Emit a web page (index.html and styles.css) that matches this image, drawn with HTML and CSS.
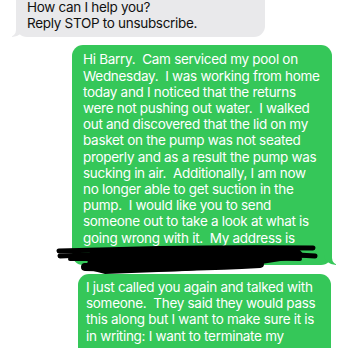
FILE: index.html
```html
<!DOCTYPE html>
<html>
<head>
<meta charset="utf-8">
<link rel="stylesheet" href="styles.css">
</head>
<body>
<div class="screen">
  <div class="row row-in">
    <div class="bubble in"><p class="msg">How can I help you?
Reply STOP to unsubscribe.</p></div>
  </div>
  <div class="row row-out">
    <div class="bubble out out-1"><p class="msg">Hi Barry.  Cam serviced my pool on
Wednesday.  I was working from home
today and I noticed that the returns
were not pushing out water.  I walked
out and discovered that the lid on my
basket on the pump was not seated
properly and as a result the pump was
sucking in air.  Additionally, I am now
no longer able to get suction in the
pump.  I would like you to send
someone out to take a look at what is
going wrong with it.  My address is
 </p></div>
  </div>
  <div class="row row-out">
    <div class="bubble out out-2"><p class="msg">I just called you again and talked with
someone.  They said they would pass
this along but I want to make sure it is
in writing: I want to terminate my</p></div>
  </div>
  <svg class="scribble" width="348" height="60" viewBox="0 230 348 60" aria-hidden="true">
    <path d="M90,251 L298,248 L306,257 L255,265 L185,271 L105,274 L86,269 Z" fill="#000"/>
    <path d="M59,251 C120,249 230,247 313,248" stroke="#000" stroke-width="5" fill="none" stroke-linecap="round"/>
    <path d="M60,256 C130,253 240,252 315,256" stroke="#000" stroke-width="5" fill="none" stroke-linecap="round"/>
    <path d="M70,259 C120,259 200,257 300,259" stroke="#000" stroke-width="4" fill="none" stroke-linecap="round"/>
    <path d="M85,267 C140,269 200,267 260,264" stroke="#000" stroke-width="8" fill="none" stroke-linecap="round"/>
  </svg>
</div>
</body>
</html>
```
FILE: styles.css
```css
html, body {
  margin: 0;
  padding: 0;
  background: #ffffff;
}

.screen {
  position: relative;
  width: 348px;
  height: 348px;
  overflow: hidden;
  font-family: "Inter", "Liberation Sans", sans-serif;
  font-size: 13.5px;
  letter-spacing: -0.3px;
  line-height: 16.2px;
}

.row {
  display: flex;
}

.row-in {
  justify-content: flex-start;
  padding-left: 16px;
  margin-top: -12px;
}

.row-out {
  justify-content: flex-end;
  padding-right: 16px;
}

.row-out + .row-out {
  margin-top: 9px;
  padding-right: 17px;
}

.row-in + .row-out {
  margin-top: 8px;
}

.bubble {
  position: relative;
  border-radius: 11px;
}

.msg {
  margin: 0;
  white-space: pre;
}

.in {
  width: 249px;
  box-sizing: border-box;
  background: #e9e9eb;
  color: #111111;
  padding: 11px 11px 6px 11px;
}

.out {
  background: #35c759;
  color: #ffffff;
  box-sizing: border-box;
}

.out-1 {
  width: 260px;
  padding: 6px 11px 3px 11px;
}

.out-2 {
  width: 253px;
  padding: 5px 8px 30px 8px;
}

.in::before {
  content: "";
  position: absolute;
  bottom: 0;
  left: -4px;
  width: 12px;
  height: 14px;
  background: #e9e9eb;
  border-bottom-right-radius: 12px 10px;
}

.in::after {
  content: "";
  position: absolute;
  bottom: 0;
  left: -10px;
  width: 10px;
  height: 14px;
  background: #ffffff;
  border-bottom-right-radius: 7px;
}

.out-1::before {
  content: "";
  position: absolute;
  bottom: 0;
  right: -4px;
  width: 12px;
  height: 14px;
  background: #35c759;
  border-bottom-left-radius: 12px 10px;
}

.out-1::after {
  content: "";
  position: absolute;
  bottom: 0;
  right: -10px;
  width: 10px;
  height: 14px;
  background: #ffffff;
  border-bottom-left-radius: 7px;
}

.scribble {
  position: absolute;
  left: 0;
  top: 230px;
}
```
